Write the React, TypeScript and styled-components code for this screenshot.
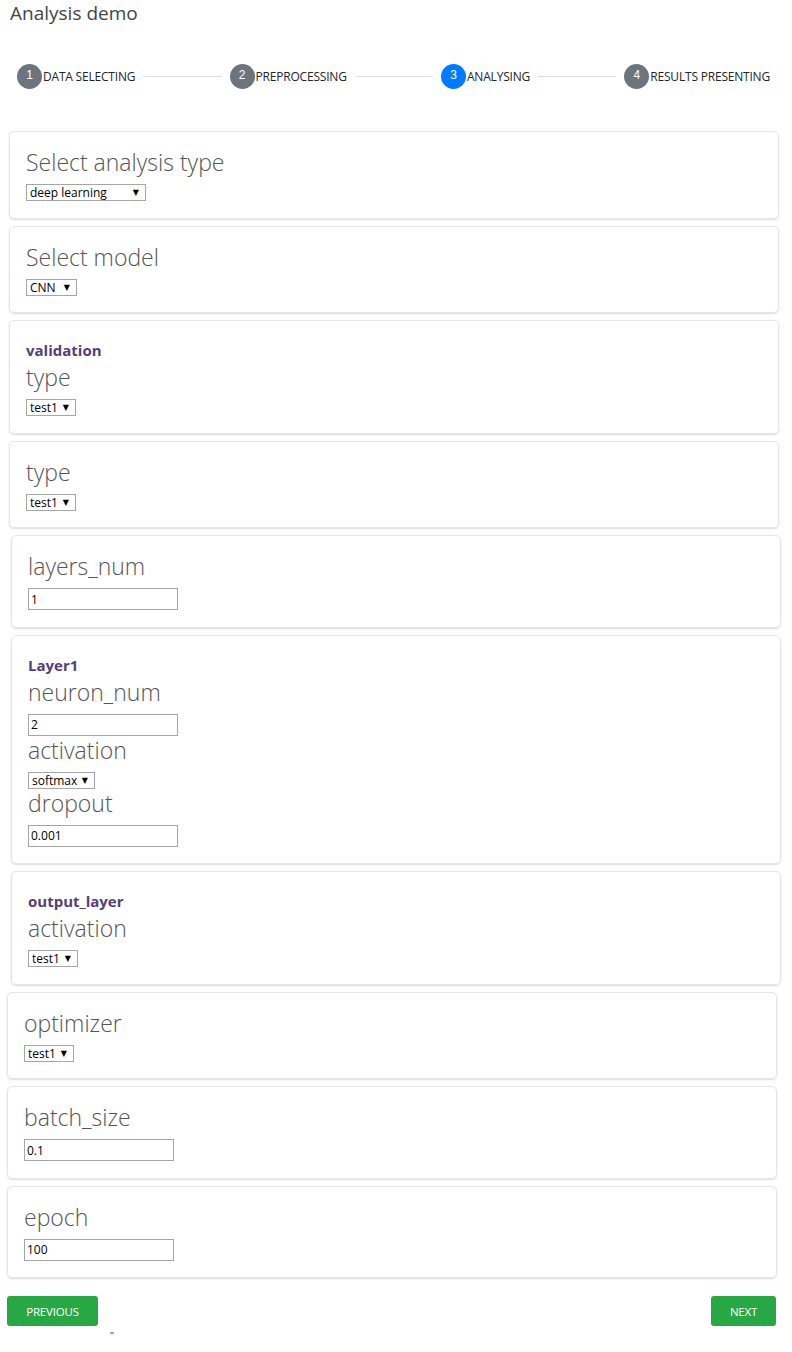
import React from "react";
import styled, { createGlobalStyle } from "styled-components";

const Global = createGlobalStyle`
  html, body { margin: 0; padding: 0; background: #fff; }
  body { font-family: "Open Sans", "Liberation Sans", sans-serif; color: #212529; }
  * { box-sizing: border-box; }
`;

const Page = styled.div`
  width: 792px;
  padding: 0 0 20px 0;
`;

const Title = styled.div`
  font-family: "Open Sans", sans-serif;
  font-size: 19px;
  color: #444;
  padding: 0 0 0 10px;
  height: 52px;
`;

const Stepper = styled.div`
  display: flex;
  align-items: center;
  padding: 0 22px 0 17px;
  height: 48px;
`;

const Step = styled.div`
  display: flex;
  align-items: center;
  flex: none;
`;

const Circle = styled.span<{ $active?: boolean }>`
  width: 25px;
  height: 25px;
  border-radius: 50%;
  background: ${(p) => (p.$active ? "#007bff" : "#6c757d")};
  color: #fff;
  font-family: "Liberation Sans", sans-serif;
  font-size: 12px;
  display: flex;
  align-items: center;
  justify-content: center;
  padding-bottom: 2px;
`;

const StepLabel = styled.span`
  font-family: "Open Sans", sans-serif;
  font-size: 12px;
  color: #212529;
  margin-left: 1px;
  letter-spacing: -0.2px;
`;

const Line = styled.div`
  flex: 1;
  height: 1px;
  background: #dedede;
  margin: 0 8px;
`;

const Cards = styled.div`
  display: flex;
  flex-direction: column;
  gap: 7px;
  margin-top: 31px;
`;

const Card = styled.div<{ $x: number }>`
  width: 770px;
  margin-left: ${(p) => p.$x}px;
  border: 1px solid #e6e6e6;
  border-radius: 5px;
  box-shadow: 0 1px 2px rgba(0, 0, 0, 0.14);
  padding: 16px 16px 16.5px 16px;
  display: flex;
  flex-direction: column;
  align-items: flex-start;
`;

const Group = styled.div`
  font-family: "Open Sans", sans-serif;
  font-weight: 700;
  font-size: 15px;
  color: #563d7c;
  line-height: 26px;
  height: 26px;
`;

const Heading = styled.div`
  font-family: "Open Sans", sans-serif;
  font-weight: 300;
  font-size: 23px;
  color: #555;
  line-height: 28px;
  height: 28px;
  margin-bottom: 8px;
  white-space: nowrap;
`;

const SelectWrap = styled.div<{ $w: number }>`
  position: relative;
  width: ${(p) => p.$w}px;
  height: 17px;
`;

const Select = styled.select`
  appearance: none;
  -webkit-appearance: none;
  display: block;
  width: 100%;
  height: 17px;
  border: 1px solid #a6a6a6;
  border-radius: 0;
  background: #fff;
  font-family: "Open Sans", sans-serif;
  font-size: 12px;
  color: #000;
  padding: 0 0 0 3px;
  line-height: 15px;
  outline: none;
`;

const Arrow = styled.span`
  position: absolute;
  right: 7px;
  top: 0;
  height: 17px;
  display: flex;
  align-items: center;
  font-size: 8px;
  color: #000;
  pointer-events: none;
  font-family: "DejaVu Sans", sans-serif;
`;

const Input = styled.input`
  display: block;
  width: 150px;
  height: 22px;
  border: 1px solid #a6a6a6;
  border-radius: 0;
  font-family: "Open Sans", sans-serif;
  font-size: 12px;
  color: #000;
  padding: 0 2px;
  outline: none;
`;

const Buttons = styled.div`
  display: flex;
  justify-content: space-between;
  padding: 0 16px 0 7px;
  margin-top: 18px;
`;

const Button = styled.button<{ $w: number }>`
  width: ${(p) => p.$w}px;
  height: 30px;
  background: #28a745;
  color: #fff;
  border: none;
  border-radius: 3px;
  font-family: "Open Sans", sans-serif;
  font-size: 11.5px;
  letter-spacing: -0.2px;
`;

const Dash = styled.div`
  width: 4px;
  height: 2px;
  background: #9aa;
  margin: 6px 0 0 110px;
`;

type Field =
  | { kind: "group"; text: string }
  | { kind: "select"; label: string; value: string; w: number }
  | { kind: "input"; label: string; value: string };

const Sel = ({ value, w }: { value: string; w: number }) => (
  <SelectWrap $w={w}>
    <Select defaultValue={value}>
      <option value={value}>{value}</option>
    </Select>
    <Arrow>▼</Arrow>
  </SelectWrap>
);

const cards: { x: number; fields: Field[] }[] = [
  { x: 9, fields: [{ kind: "select", label: "Select analysis type", value: "deep learning", w: 120 }] },
  { x: 9, fields: [{ kind: "select", label: "Select model", value: "CNN", w: 51 }] },
  {
    x: 9,
    fields: [
      { kind: "group", text: "validation" },
      { kind: "select", label: "type", value: "test1", w: 50 },
    ],
  },
  { x: 9, fields: [{ kind: "select", label: "type", value: "test1", w: 50 }] },
  { x: 11, fields: [{ kind: "input", label: "layers_num", value: "1" }] },
  {
    x: 11,
    fields: [
      { kind: "group", text: "Layer1" },
      { kind: "input", label: "neuron_num", value: "2" },
      { kind: "select", label: "activation", value: "softmax", w: 67 },
      { kind: "input", label: "dropout", value: "0.001" },
    ],
  },
  {
    x: 11,
    fields: [
      { kind: "group", text: "output_layer" },
      { kind: "select", label: "activation", value: "test1", w: 50 },
    ],
  },
  { x: 7, fields: [{ kind: "select", label: "optimizer", value: "test1", w: 50 }] },
  { x: 7, fields: [{ kind: "input", label: "batch_size", value: "0.1" }] },
  { x: 7, fields: [{ kind: "input", label: "epoch", value: "100" }] },
];

const steps = ["DATA SELECTING", "PREPROCESSING", "ANALYSING", "RESULTS PRESENTING"];

export default function App() {
  return (
    <Page>
      <Global />
      <Title>Analysis demo</Title>
      <Stepper>
        {steps.map((s, i) => (
          <React.Fragment key={s}>
            {i > 0 && <Line />}
            <Step>
              <Circle $active={i === 2}>{i + 1}</Circle>
              <StepLabel>{s}</StepLabel>
            </Step>
          </React.Fragment>
        ))}
      </Stepper>
      <Cards>
        {cards.map((c, ci) => (
          <Card key={ci} $x={c.x}>
            {c.fields.map((f, fi) =>
              f.kind === "group" ? (
                <Group key={fi}>{f.text}</Group>
              ) : (
                <React.Fragment key={fi}>
                  <Heading>{f.label}</Heading>
                  {f.kind === "select" ? (
                    <Sel value={f.value} w={f.w} />
                  ) : (
                    <Input defaultValue={f.value} />
                  )}
                </React.Fragment>
              )
            )}
          </Card>
        ))}
      </Cards>
      <Buttons>
        <Button $w={91}>PREVIOUS</Button>
        <Button $w={65}>NEXT</Button>
      </Buttons>
      <Dash />
    </Page>
  );
}
